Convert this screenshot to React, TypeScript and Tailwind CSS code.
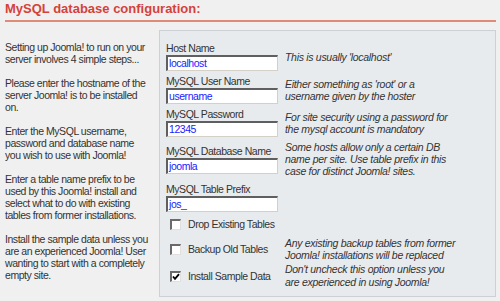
import React from 'react';

const intro = [
  ['Setting up Joomla! to run on your', 'server involves 4 simple steps...'],
  ['Please enter the hostname of the', 'server Joomla! is to be installed', 'on.'],
  ['Enter the MySQL username,', 'password and database name', 'you wish to use with Joomla!'],
  ['Enter a table name prefix to be', 'used by this Joomla! install and', 'select what to do with existing', 'tables from former installations.'],
  ['Install the sample data unless you', 'are an experienced Joomla! User', 'wanting to start with a completely', 'empty site.'],
];

function Field({ label, value }: { label: string; value: string }) {
  return (
    <div className="flex w-[119px] shrink-0 flex-col">
      <div className="h-[12px] leading-[12px] whitespace-nowrap">{label}</div>
      <div className="mt-[1px] h-[16px] w-[112px] border-t-2 border-l-2 border-b border-r border-t-[#5f5f5f] border-l-[#5f5f5f] border-b-[#d4d0c8] border-r-[#d4d0c8] bg-white pl-[1px] leading-[13px] text-[#1a1aff]">
        {value}
      </div>
    </div>
  );
}

function Help({ lines, lh = 'leading-[12px]' }: { lines: string[]; lh?: string }) {
  return (
    <div className={`italic tracking-[-0.3px] text-[#333] ${lh}`}>
      {lines.map((l) => (
        <div key={l} className="whitespace-nowrap">{l}</div>
      ))}
    </div>
  );
}

function Check({ checked, label }: { checked: boolean; label: string }) {
  return (
    <div className="flex w-[119px] shrink-0 items-center">
      <div className="ml-[4px] flex h-[11px] w-[11px] items-center justify-center border-t-2 border-l-2 border-b border-r border-t-[#6a6a6a] border-l-[#6a6a6a] border-b-[#e0e0e0] border-r-[#e0e0e0] bg-white">
        {checked && (
          <svg width="8" height="8" viewBox="0 0 8 8">
            <path d="M1 3.5 L3 5.8 L7 1.2" stroke="#000" strokeWidth="1.9" fill="none" />
          </svg>
        )}
      </div>
      <span className="ml-[7px] whitespace-nowrap leading-[12px]">{label}</span>
    </div>
  );
}

export default function App() {
  return (
    <div className="h-[301px] w-[500px] overflow-hidden bg-[#f0f0f0] font-['Liberation_Sans',Arial,sans-serif] text-[10.5px] tracking-[-0.45px] text-[#333]">
      <div className="px-[5px] pt-[1px]">
        <h1 className="h-[16px] text-[13px] font-bold leading-[16px] tracking-normal text-[#d4423a]">
          MySQL database configuration:
        </h1>
        <div className="mt-[3px] h-[2px] w-[491px] bg-[#e08a78]" />
      </div>
      <div className="flex">
        <div className="ml-[5px] mt-[19px] w-[154px] shrink-0 leading-[12px] tracking-[-0.45px]">
          {intro.map((p, i) => (
            <div key={i} className={i > 0 ? 'mt-[12px]' : ''}>
              {p.map((l) => (
                <div key={l} className="whitespace-nowrap">{l}</div>
              ))}
            </div>
          ))}
        </div>
        <div className="mt-[8px] h-[267px] w-[337px] border border-[#cdd0d4] bg-[#e8ebee] pl-[6px] pt-[11px]">
          <div className="flex h-[29px] items-center">
            <Field label="Host Name" value="localhost" />
            <Help lines={["This is usually 'localhost'"]} />
          </div>
          <div className="mt-[4px] flex h-[29px] items-center">
            <Field label="MySQL User Name" value="username" />
            <Help lines={["Either something as 'root' or a", 'username given by the hoster']} />
          </div>
          <div className="mt-[4px] flex h-[29px] items-center">
            <Field label="MySQL Password" value="12345" />
            <Help lines={['For site security using a password for', 'the mysql account is mandatory']} />
          </div>
          <div className="mt-[4px] flex h-[36px] items-center">
            <Field label="MySQL Database Name" value="joomla" />
            <Help lines={['Some hosts allow only a certain DB', 'name per site. Use table prefix in this', 'case for distinct Joomla! sites.']} />
          </div>
          <div className="mt-[6px] flex h-[29px] items-center">
            <Field label="MySQL Table Prefix" value="jos_" />
          </div>
          <div className="mt-[6px] flex h-[12px] items-center">
            <Check checked={false} label="Drop Existing Tables" />
          </div>
          <div className="mt-[7px] flex h-[24px] items-center">
            <Check checked={false} label="Backup Old Tables" />
            <Help lines={['Any existing backup tables from former', 'Joomla! installations will be replaced']} />
          </div>
          <div className="mt-[2px] flex h-[26px] items-center">
            <Check checked label="Install Sample Data" />
            <Help lines={["Don't uncheck this option unless you", 'are experienced in using Joomla!']} lh="leading-[13px]" />
          </div>
        </div>
      </div>
    </div>
  );
}
